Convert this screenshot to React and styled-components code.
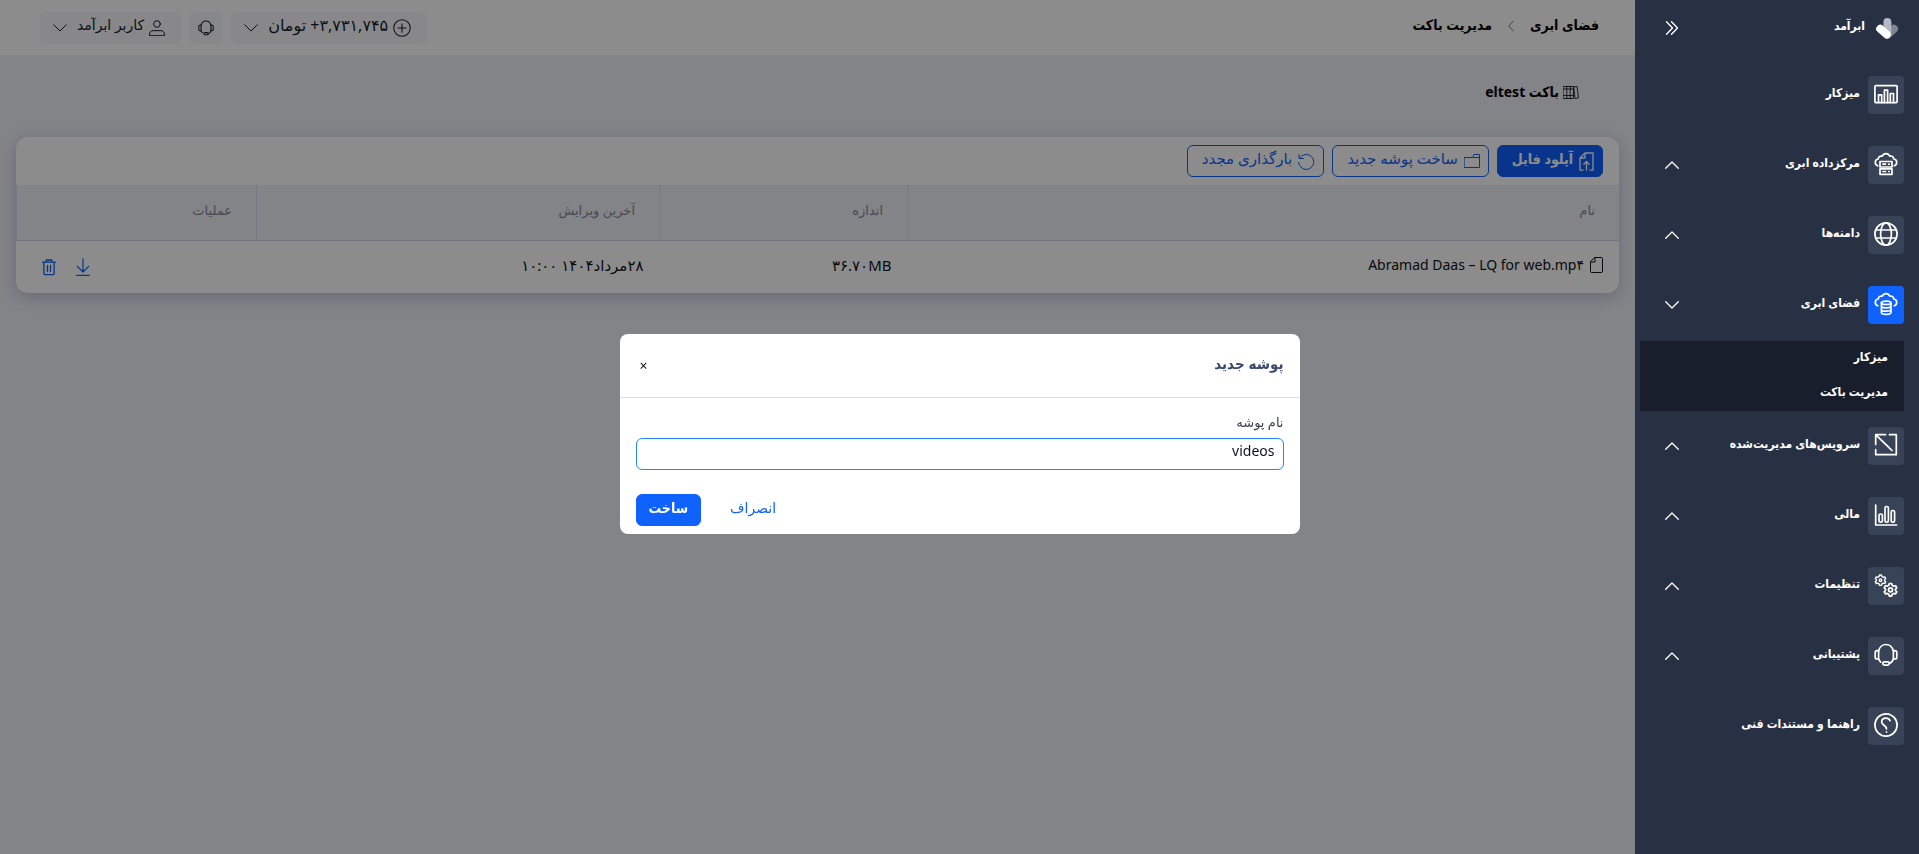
import React, { useState } from "react";
import styled, { createGlobalStyle } from "styled-components";

const GlobalStyle = createGlobalStyle`
  * {
    box-sizing: border-box;
  }

  body {
    margin: 0;
    background: #eff0f7;
    color: #111318;
    font-family: "Noto Sans", "DejaVu Sans", sans-serif;
    font-size: 14px;
  }

  button,
  input {
    font-family: inherit;
  }
`;

// bold Persian text is set in the condensed face
const boldFont = `"Noto Sans", "DejaVu Sans Condensed", "DejaVu Sans", sans-serif`;

const Svg = styled.svg`
  display: block;
  flex: none;
  fill: none;
  stroke: currentColor;
  stroke-width: ${({ $stroke }) => $stroke || 1};
  stroke-linecap: round;
  stroke-linejoin: round;
`;

const Layout = styled.div`
  display: flex;
  min-height: 100vh;
`;

/* ---------- sidebar ---------- */

const Sidebar = styled.aside`
  position: relative;
  z-index: 2;
  flex: 0 0 284px;
  padding: 16px 15px 16px 5px;
  background: #283143;
  color: #fff;
  font-family: ${boldFont};
`;

const Brand = styled.div`
  display: flex;
  align-items: center;
  height: 24px;
  margin-bottom: 36px;
  padding: 0 5px 0 25px;
  gap: 10px;
  font-size: 12px;
  font-weight: 700;
  line-height: 20px;

  span {
    padding-bottom: 4px;
  }
`;

const CollapseButton = styled.button`
  display: flex;
  margin-right: auto;
  padding: 0;
  border: 0;
  background: none;
  color: #fff;
  cursor: pointer;
`;

const Menu = styled.ul`
  margin: 0;
  padding: 0;
  list-style: none;
`;

const MenuItem = styled.li`
  margin-bottom: ${({ $open }) => ($open ? 16 : 32)}px;
`;

const MenuLink = styled.a`
  display: flex;
  align-items: center;
  gap: 8px;
  height: 38px;
  padding-left: 25px;
  color: #fff;
  font-size: 12px;
  font-weight: 700;
  line-height: 20px;
  text-decoration: none;
`;

const MenuLabel = styled.span`
  flex: 1;
  padding-bottom: 4px;
`;

const MenuIcon = styled.span`
  width: 36px;
  height: 38px;
  padding: 6px;
  border-radius: 4px;
  background: ${({ $active }) => ($active ? "#0f62fe" : "#394357")};
`;

const SubMenu = styled.ul`
  margin: 17px 0 0;
  padding: 0;
  background: #181e2b;
  list-style: none;
`;

const SubLink = styled.a`
  display: block;
  height: 35px;
  padding: 6px 16px;
  color: #fff;
  font-size: 12px;
  font-weight: 600;
  line-height: 20px;
  text-decoration: none;
`;

/* ---------- header ---------- */

const Content = styled.div`
  flex: 1;
  min-width: 0;
`;

const TopBar = styled.header`
  display: flex;
  align-items: center;
  justify-content: space-between;
  height: 55px;
  padding: 0 36px 0 40px;
  background: #fff;
`;

const Breadcrumb = styled.nav`
  display: flex;
  align-items: center;
  gap: 16px;
  padding-bottom: 4px;
  font-family: ${boldFont};
  font-size: 14px;
  font-weight: 700;

  a {
    padding-bottom: 2px;
    color: #000;
    text-decoration: none;
  }

  svg {
    color: #7c8290;
  }
`;

const Chips = styled.div`
  display: flex;
  gap: 8px;
`;

const Chip = styled.button`
  display: flex;
  align-items: center;
  height: 32px;
  padding: ${({ $square }) => ($square ? "0 9px" : "0 16px 0 13px")};
  border: 0;
  border-radius: 6px;
  background: #f7f8fb;
  color: #161b2c;
  font-size: ${({ $large }) => ($large ? 16 : 14)}px;
  cursor: pointer;

  span {
    padding: 0 5px 6px 10px;
  }
`;

/* ---------- page ---------- */

const PageTitle = styled.h1`
  display: flex;
  align-items: center;
  gap: 4px;
  height: 20px;
  margin: 27px 56px 35px;
  color: #000;
  font-family: ${boldFont};
  font-size: 14px;
  font-weight: 700;

  span {
    padding-bottom: 2px;
  }
`;

const Card = styled.section`
  margin: 0 16px;
  overflow: hidden;
  border-radius: 12px;
  background: #fff;
  box-shadow: 0 4px 16px rgba(70, 90, 130, 0.3);
`;

const Toolbar = styled.div`
  display: flex;
  gap: 8px;
  padding: 8px 16px;
`;

const Button = styled.button`
  display: flex;
  align-items: center;
  justify-content: center;
  gap: 6px;
  height: 32px;
  padding: ${({ $plain }) => ($plain ? "0 12px" : "0 8px 0 14px")};
  border: 1px solid #0f62fe;
  border-radius: 6px;
  background: ${({ $primary }) => ($primary ? "#0f62fe" : "#fff")};
  color: ${({ $primary }) => ($primary ? "#fff" : "#0f62fe")};
  font-family: ${({ $primary }) => ($primary ? boldFont : "inherit")};
  font-size: ${({ $primary }) => ($primary ? 14 : 15)}px;
  font-weight: ${({ $primary }) => ($primary ? 600 : 400)};
  cursor: pointer;

  span {
    padding-bottom: 6px;
  }
`;

const TextButton = styled(Button)`
  border-color: transparent;
  background: transparent;
  font-size: 14px;
`;

const Table = styled.table`
  width: 100%;
  border-collapse: collapse;
  table-layout: fixed;
`;

const HeadCell = styled.th`
  width: ${({ $width }) => $width};
  height: 55px;
  padding: 0 24px 4px;
  border-bottom: 1px solid #d3d6e2;
  border-left: 1px solid #dcdfe8;
  background: #eff0f7;
  color: #83879a;
  font-size: 13px;
  font-weight: 400;
  text-align: right;
`;

const Cell = styled.td`
  height: 53px;
  padding: 0 16px 4px;
  color: #111318;
  font-size: 15px;
`;

const FileName = styled.div`
  display: flex;
  align-items: center;
  gap: 6px;
  font-size: 14px;
`;

const Actions = styled.div`
  display: flex;
  justify-content: flex-end;
  gap: 20px;
  padding: 4px 0 0 9px;
`;

const IconButton = styled.button`
  display: flex;
  padding: 0;
  border: 0;
  background: none;
  color: #0f62fe;
  cursor: pointer;
`;

/* ---------- modal ---------- */

const Overlay = styled.div`
  position: fixed;
  inset: 0;
  z-index: 1;
  display: flex;
  align-items: center;
  justify-content: center;
  padding-top: 14px;
  background: rgba(0, 0, 0, 0.45);
`;

const Modal = styled.form`
  width: 680px;
  border-radius: 8px;
  background: #fff;
`;

const ModalHeader = styled.div`
  display: flex;
  align-items: center;
  justify-content: space-between;
  height: 64px;
  padding: 0 16px;
  border-bottom: 1px solid #dcdee9;
`;

const ModalTitle = styled.h2`
  margin: 0;
  padding-bottom: 6px;
  color: #3a4a6e;
  font-family: ${boldFont};
  font-size: 15px;
  font-weight: 600;
`;

const CloseButton = styled.button`
  width: 16px;
  height: 16px;
  padding: 0;
  border: 0;
  background: none;
  color: #111318;
  font-size: 14px;
  line-height: 14px;
  cursor: pointer;
`;

const ModalBody = styled.div`
  padding: 14px 16px 24px;
`;

const Label = styled.label`
  display: block;
  height: 26px;
  color: #3b4256;
  font-size: 13px;
  line-height: 20px;
`;

const TextInput = styled.input`
  display: block;
  width: 100%;
  height: 32px;
  padding: 0 8px 8px;
  border: 1px solid #2684ff;
  border-radius: 6px;
  outline: 0;
  background: #fff;
  color: #111318;
  font-size: 14px;
`;

const ModalFooter = styled.div`
  display: flex;
  justify-content: flex-end;
  gap: 16px;
  padding: 0 16px 8px;
`;

/* ---------- icons ---------- */

const Chevron = ({ dir = "down", stroke = 1 }) => (
  <Svg width="14" height="8" viewBox="0 0 14 8" $stroke={stroke}>
    <path d={dir === "up" ? "M.7 7.3 7 1l6.3 6.3" : "M.7.7 7 7 13.3.7"} />
  </Svg>
);

const ChevronLeft = () => (
  <Svg width="6" height="12" viewBox="0 0 6 12">
    <path d="M5.4 1 .8 6l4.6 5" />
  </Svg>
);

const DoubleChevron = () => (
  <Svg width="14" height="14" viewBox="0 0 14 14" $stroke={1.3}>
    <path d="M1.5.7 7.5 7l-6 6.3M6.5.7l6 6.3-6 6.3" />
  </Svg>
);

const Logo = () => (
  <Svg width="24" height="24" viewBox="0 0 24 24" $stroke={8}>
    <path d="M19 12.8 13 18.4" stroke="#7e8593" />
    <path d="M12.4 6v9" stroke="#b4b9c2" />
    <path d="M5.2 12.8 11.8 18.6" stroke="#fff" />
  </Svg>
);

const Icon = ({ size = 24, stroke = 1.7, children }) => (
  <Svg width={size} height={size} viewBox="0 0 24 24" $stroke={stroke}>
    {children}
  </Svg>
);

const DashboardIcon = () => (
  <Icon>
    <rect x=".9" y="3.6" width="22.2" height="17" rx="1" />
    <path d="M4.5 20.5v-7.7h3.2v7.7M10.4 20.5V8.2h3.2v12.3M16.3 20.5v-9h3.2v9" />
  </Icon>
);

const CLOUD =
  "M3.7 13.8c-1.6-.6-2.4-1.9-2.4-3.4 0-1.8 1.2-3.2 3-3.4C4.3 5 6 3.6 8.2 4.2 9 2.6 10.4 1.7 12 1.7s3 .9 3.8 2.5c2.2-.6 3.9.8 3.9 2.8 1.8.2 3 1.6 3 3.4 0 1.5-.8 2.8-2.4 3.4";

const CloudServerIcon = () => (
  <Icon>
    <path d={CLOUD} />
    <rect x="6" y="9.5" width="12" height="5.5" />
    <rect x="6" y="16.8" width="12" height="5.5" />
    <path d="M9 12.2h2.5M14.8 12.2h.4M9 19.5h2.5M14.8 19.5h.4" />
  </Icon>
);

const CloudDataIcon = () => (
  <Icon>
    <path d={CLOUD} />
    <ellipse cx="12.2" cy="10.8" rx="4.8" ry="1.7" />
    <path d="M7.4 10.8v9.8c0 1.1 2.1 1.8 4.8 1.8s4.8-.7 4.8-1.8v-9.8M7.4 14.1c0 1.1 2.1 1.7 4.8 1.7s4.8-.6 4.8-1.7M7.4 17.4c0 1.1 2.1 1.7 4.8 1.7s4.8-.6 4.8-1.7" />
  </Icon>
);

const GlobeIcon = () => (
  <Icon>
    <circle cx="12" cy="12" r="11.1" />
    <ellipse cx="12" cy="12" rx="5.4" ry="11.1" />
    <path d="M1.7 8h20.6M1.7 16h20.6" />
  </Icon>
);

const ManagedIcon = () => (
  <Icon>
    <path d="M15.5 1.7h6.8v20H1.7v-5M1.7 11.5V1.7h9.8M1.9 1.9 18 17.5" />
  </Icon>
);

const FinanceIcon = () => (
  <Icon>
    <path d="M1.7 2v20h20.9" />
    <rect x="5" y="11" width="3.4" height="8.2" rx="1.5" />
    <rect x="11" y="3.5" width="3.4" height="15.7" rx="1.5" />
    <rect x="17.2" y="7.5" width="3.4" height="11.7" rx="1.5" />
  </Icon>
);

const GEAR =
  "M-1.2-6.3h2.4l.5 1.8 1.6.9 1.8-.5L6.3-2 5-.7V.7L6.3 2 5.1 4.1l-1.8-.5-1.6.9-.5 1.8h-2.4l-.5-1.8-1.6-.9-1.8.5L-6.3 2-5 .7V-.7L-6.3-2l1.2-2.1 1.8.5 1.6-.9z";

const SettingsIcon = () => (
  <Icon>
    <g transform="translate(6.5 7.2) scale(.82)">
      <path d={GEAR} />
      <circle r="1.5" />
    </g>
    <g transform="translate(16.5 16.8)">
      <path d={GEAR} />
      <circle r="2" />
    </g>
  </Icon>
);

const HeadsetIcon = ({ size, stroke }) => (
  <Icon size={size} stroke={stroke}>
    <path d="M4.6 8C5.4 4.200 8.400 1.5 12 1.5s6.600 2.700 7.400 6.500M19.400 15.800c-.5 2.200-2 4-4.100 4.700M4.600 15.800c.4 1.500 1.200 2.500 2.100 3.300" />
    <path d="M4.600 7.600v8.400H3.200c-1.100 0-2-.8-2-1.800V9.400c0-1 .9-1.800 2-1.800zM19.400 7.600v8.400h1.400c1.100 0 2-.8 2-1.800V9.400c0-1-.9-1.800-2-1.800z" />
    <rect x="8.8" y="18.9" width="6.5" height="3.3" rx="1.6" />
  </Icon>
);

const HelpIcon = () => (
  <Icon>
    <circle cx="12" cy="12" r="11.1" />
    <path d="M16 7.6c-.7-1.6-2.2-2.4-4-2.4-2.5 0-4.3 1.5-4.3 3.7 0 3.5 4.8 3.2 4.8 7.1M12.5 18.8v.3" />
  </Icon>
);

const BooksIcon = () => (
  <Svg width="16" height="13" viewBox="0 0 16 13" $stroke={0.8}>
    <path d="M.5.5h10v12H.5zM3.8.5v12M7.2.5v12M.5 3h10M.5 9.5h10M11 1l3-.6 1.5 11.4-3 .7z" />
  </Svg>
);

const PlusCircleIcon = () => (
  <Icon size={18} stroke={1.4}>
    <circle cx="12" cy="12" r="11" />
    <path d="M12 6.5v11M6.5 12h11" />
  </Icon>
);

const UserIcon = () => (
  <Icon size={16} stroke={1.5}>
    <circle cx="12" cy="6" r="5" />
    <path d="M1 23v-2c0-3 2-5 5-5h12c3 0 5 2 5 5v2z" />
  </Icon>
);

const FileIcon = () => (
  <Svg width="13" height="16" viewBox="0 0 13 16">
    <path d="M5 .5h6.5c.6 0 1 .4 1 1v13c0 .6-.4 1-1 1h-10c-.6 0-1-.4-1-1V5zM5 .5V5H.5" />
  </Svg>
);

const UploadIcon = () => (
  <Svg width="15" height="19" viewBox="0 0 15 19" $stroke={1.3}>
    <path d="M4 18.2H1V6l5-5h8v17.2h-3M6 1v5H1M7.5 18V9.5M4.8 12.2l2.7-2.7 2.7 2.7" />
  </Svg>
);

const FolderIcon = () => (
  <Svg width="16" height="14" viewBox="0 0 16 14">
    <path d="M.5 3.5h8l1.5-3h5.5v13H.5zM9 3.5h6.5" />
  </Svg>
);

const ReloadIcon = () => (
  <Svg width="17" height="17" viewBox="0 0 17 17">
    <path d="M1.5 5.5a7.5 7.5 0 1 1-.8 4M1 1.5v4h4.5" />
  </Svg>
);

const DownloadIcon = () => (
  <Svg width="14" height="18" viewBox="0 0 14 18" $stroke={1.2}>
    <path d="M7 .7v13M1.3 8.3 7 14l5.7-5.7M.7 17.4h12.6" />
  </Svg>
);

const TrashIcon = () => (
  <Svg width="14" height="18" viewBox="0 0 14 18" $stroke={1.3}>
    <path d="M.7 4.2h12.6M4.3 4V2h5.4v2M1.9 4.5v11c0 .7.4 1.2 1.1 1.2h8c.7 0 1.1-.5 1.1-1.2v-11M5.5 7.5v6M8.5 7.5v6" />
  </Svg>
);

const menuItems = [
  { label: "میزکار", icon: DashboardIcon },
  { label: "مرکزداده ابری", icon: CloudServerIcon, children: [] },
  { label: "دامنه‌ها", icon: GlobeIcon, children: [] },
  {
    label: "فضای ابری",
    icon: CloudDataIcon,
    active: true,
    children: ["میزکار", "مدیریت باکت"],
  },
  { label: "سرویس‌های مدیریت‌شده", icon: ManagedIcon, children: [] },
  { label: "مالی", icon: FinanceIcon, children: [] },
  { label: "تنظیمات", icon: SettingsIcon, children: [] },
  { label: "پشتیبانی", icon: HeadsetIcon, children: [] },
  { label: "راهنما و مستندات فنی", icon: HelpIcon },
];

const files = [
  {
    name: "Abramad Daas – LQ for web.mp۴",
    size: "۳۶.۷۰MB",
    date: "۲۸مرداد۱۴۰۴ ۱۰:۰۰",
  },
];

const SideMenu = () => (
  <Sidebar>
    <Brand>
      <Logo />
      <span>ابرآمد</span>
      <CollapseButton type="button" aria-label="بستن منو">
        <DoubleChevron />
      </CollapseButton>
    </Brand>
    <Menu>
      {menuItems.map(({ label, icon: ItemIcon, active, children }) => (
        <MenuItem key={label} $open={active}>
          <MenuLink href="#">
            <MenuIcon $active={active}>
              <ItemIcon />
            </MenuIcon>
            <MenuLabel>{label}</MenuLabel>
            {children && (
              <Chevron dir={active ? "down" : "up"} stroke={1.3} />
            )}
          </MenuLink>
          {active && (
            <SubMenu>
              {children.map((child) => (
                <li key={child}>
                  <SubLink href="#">{child}</SubLink>
                </li>
              ))}
            </SubMenu>
          )}
        </MenuItem>
      ))}
    </Menu>
  </Sidebar>
);

const Header = () => (
  <TopBar>
    <Breadcrumb>
      <a href="#">فضای ابری</a>
      <ChevronLeft />
      <a href="#">مدیریت باکت</a>
    </Breadcrumb>
    <Chips>
      <Chip type="button" $large>
        <PlusCircleIcon />
        <span>
          <bdi dir="ltr">+۳,۷۳۱,۷۴۵</bdi> تومان
        </span>
        <Chevron />
      </Chip>
      <Chip type="button" $square aria-label="پشتیبانی">
        <HeadsetIcon size={16} stroke={1.6} />
      </Chip>
      <Chip type="button">
        <UserIcon />
        <span>کاربر ابرآمد</span>
        <Chevron />
      </Chip>
    </Chips>
  </TopBar>
);

const FileTable = () => (
  <Table>
    <thead>
      <tr>
        <HeadCell $width="auto">نام</HeadCell>
        <HeadCell $width="248px">اندازه</HeadCell>
        <HeadCell $width="403px">آخرین ویرایش</HeadCell>
        <HeadCell $width="240px">عملیات</HeadCell>
      </tr>
    </thead>
    <tbody>
      {files.map((file) => (
        <tr key={file.name}>
          <Cell>
            <FileName>
              <FileIcon />
              <bdi dir="ltr">{file.name}</bdi>
            </FileName>
          </Cell>
          <Cell>
            <bdi dir="ltr">{file.size}</bdi>
          </Cell>
          <Cell>{file.date}</Cell>
          <Cell>
            <Actions>
              <IconButton type="button" aria-label="دانلود">
                <DownloadIcon />
              </IconButton>
              <IconButton type="button" aria-label="حذف">
                <TrashIcon />
              </IconButton>
            </Actions>
          </Cell>
        </tr>
      ))}
    </tbody>
  </Table>
);

const NewFolderModal = () => {
  const [name, setName] = useState("videos");

  return (
    <Overlay>
      <Modal onSubmit={(e) => e.preventDefault()}>
        <ModalHeader>
          <ModalTitle>پوشه جدید</ModalTitle>
          <CloseButton type="button" aria-label="بستن">
            ×
          </CloseButton>
        </ModalHeader>
        <ModalBody>
          <Label htmlFor="folder-name">نام پوشه</Label>
          <TextInput
            id="folder-name"
            value={name}
            onChange={(e) => setName(e.target.value)}
          />
        </ModalBody>
        <ModalFooter>
          <TextButton type="button" $plain>
            <span>انصراف</span>
          </TextButton>
          <Button type="submit" $primary $plain>
            <span>ساخت</span>
          </Button>
        </ModalFooter>
      </Modal>
    </Overlay>
  );
};

function App() {
  return (
    <Layout dir="rtl" lang="fa">
      <GlobalStyle />
      <SideMenu />
      <Content>
        <Header />
        <main>
          <PageTitle>
            <BooksIcon />
            <span>باکت eltest</span>
          </PageTitle>
          <Card>
            <Toolbar>
              <Button type="button" $primary>
                <UploadIcon />
                <span>آپلود فایل</span>
              </Button>
              <Button type="button">
                <FolderIcon />
                <span>ساخت پوشه جدید</span>
              </Button>
              <Button type="button">
                <ReloadIcon />
                <span>بارگذاری مجدد</span>
              </Button>
            </Toolbar>
            <FileTable />
          </Card>
        </main>
      </Content>
      <NewFolderModal />
    </Layout>
  );
}

export default App;
